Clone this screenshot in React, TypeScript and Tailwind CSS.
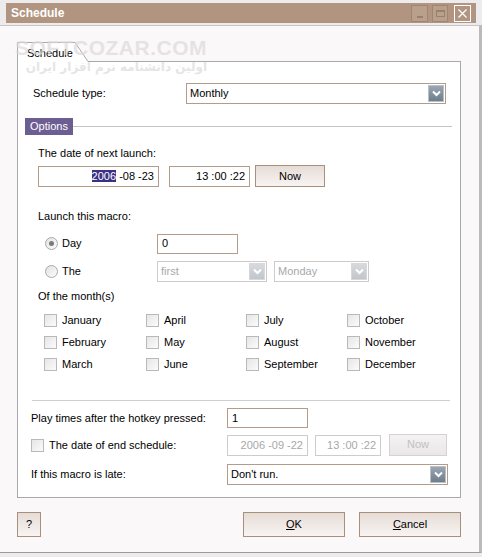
import React from "react";

// tan / taupe skin colours taken from the window chrome
const fieldBorder = "border border-[#b39d8a]";
const offBorder = "border border-[#cfcbca]";

function Chevron({ color = "#ffffff" }: { color?: string }) {
    return (
        <svg width="9" height="7" viewBox="0 0 9 7">
            <path d="M1 1.5 L4.5 5 L8 1.5" fill="none" stroke={color} strokeWidth="2" />
        </svg>
    );
}

function DropDown({ value, width, disabled }: { value: string; width: string; disabled?: boolean }) {
    return (
        <div className={`${width} h-[21px] flex items-center bg-white ${disabled ? offBorder : fieldBorder}`}>
            <span className={`flex-1 pl-[3px] ${disabled ? "text-[#a8a8a8]" : "text-black"}`}>{value}</span>
            <div
                className={`w-[16px] h-[17px] mr-[1px] flex items-center justify-center border ${
                    disabled
                        ? "border-[#d8d8d8] bg-gradient-to-b from-[#d7dadd] to-[#c1c6cb]"
                        : "border-[#b9c0c8] bg-gradient-to-b from-[#9aa6b3] to-[#6e7d8d]"
                }`}
            >
                <Chevron />
            </div>
        </div>
    );
}

function Field({ value, width, align = "left", disabled }: { value: React.ReactNode; width: string; align?: "left" | "right"; disabled?: boolean }) {
    return (
        <div
            className={`${width} h-[21px] flex items-center bg-white px-[4px] ${disabled ? offBorder + " text-[#a8a8a8]" : fieldBorder} ${
                align === "right" ? "justify-end" : ""
            }`}
        >
            {value}
        </div>
    );
}

function Btn({ children, width, height = "h-[22px]", disabled }: { children: React.ReactNode; width: string; height?: string; disabled?: boolean }) {
    return (
        <button
            className={`${width} ${height} flex items-center justify-center border ${
                disabled
                    ? "border-[#d6d2d2] bg-gradient-to-b from-[#f4f2f2] to-[#e9e7e7] text-[#c2c2c2]"
                    : "border-[#a8907c] bg-gradient-to-b from-[#e6dcd6] to-[#f8f4f2] text-black"
            }`}
        >
            {children}
        </button>
    );
}

function Check() {
    return <span className="w-[13px] h-[13px] border border-[#b9b9b9] bg-gradient-to-br from-[#e6e6e6] to-[#fbfbfb] shrink-0" />;
}

function Radio({ on }: { on?: boolean }) {
    return (
        <span className="w-[13px] h-[13px] rounded-full border border-[#a9a9a9] bg-gradient-to-br from-[#e2e2e2] to-[#fcfcfc] flex items-center justify-center shrink-0">
            {on && <span className="w-[5px] h-[5px] rounded-full bg-[#7a7a7a]" />}
        </span>
    );
}

const MONTHS = [
    ["January", "April", "July", "October"],
    ["February", "May", "August", "November"],
    ["March", "June", "September", "December"],
];

export default function App() {
    return (
        <div className="w-[482px] h-[557px] relative bg-[#eeebed] font-['Liberation_Sans',Arial,sans-serif] text-[11px] text-black leading-[13px] overflow-hidden">
            {/* title bar */}
            <div className="pt-[3px] px-[6px]">
                <div className="h-[20px] bg-[#b19581] flex items-center pl-[5px] pr-[5px]">
                    <span className="flex-1 text-white font-bold text-[12px]">Schedule</span>
                    <div className="w-[17px] h-[17px] border border-[#a08672] bg-[#b8a08d] flex items-end justify-center pb-[3px]">
                        <span className="w-[6px] h-[2px] bg-[#9a7f6b]" />
                    </div>
                    <div className="w-[16px] h-[17px] ml-[4px] border border-[#a08672] bg-[#b8a08d] flex items-center justify-center">
                        <span className="w-[9px] h-[7px] border border-[#9a7f6b] border-t-2" />
                    </div>
                    <div className="w-[17px] h-[17px] ml-[6px] border border-white flex items-center justify-center">
                        <svg width="9" height="9" viewBox="0 0 9 9">
                            <path d="M0.5 0.5 L8.5 8.5 M8.5 0.5 L0.5 8.5" stroke="#ffffff" strokeWidth="1.2" />
                        </svg>
                    </div>
                </div>
            </div>

            {/* dialog body */}
            <div className="mt-[2px] h-[528px] border-t border-[#c9c5c7] border-r-[3px] border-r-[#bdb9bb] border-b border-b-[#9e9a9c] bg-[#fbf8f9] pl-[17px] pr-[18px] pt-[16px]">
                {/* tab strip */}
                <div className="flex items-end h-[20px]">
                    <div className="w-[58px] h-[20px] border-l border-t border-[#a9a9a9] bg-white pl-[9px] pt-[4px]">Schedule</div>
                    <svg width="14" height="20" viewBox="0 0 14 20" className="shrink-0">
                        <path d="M0 0 L0.5 0.5 L13 19.5 L0 19.5 Z" fill="#ffffff" />
                        <path d="M0 0.5 L13 19.5 L14 19.5" fill="none" stroke="#a9a9a9" strokeWidth="1" />
                    </svg>
                    <div className="flex-1 border-b border-[#a9a9a9]" />
                </div>

                {/* tab panel */}
                <div className="h-[436px] border-l border-r border-b border-[#a9a9a9] bg-white pt-[21px]">
                    <div className="flex items-center h-[21px]">
                        <span className="ml-[15px] w-[153px]">Schedule type:</span>
                        <DropDown value="Monthly" width="w-[260px]" />
                    </div>

                    <div className="flex items-center mt-[14px] h-[17px]">
                        <span className="ml-[7px] h-[17px] px-[5px] bg-[#6c5e93] text-white flex items-center">Options</span>
                        <span className="flex-1 h-px bg-[#c4c4c4] mr-[8px]" />
                    </div>

                    <div className="ml-[20px] mt-[12px]">The date of next launch:</div>
                    <div className="flex items-center ml-[20px] mt-[6px]">
                        <Field
                            width="w-[121px]"
                            align="right"
                            value={
                                <span>
                                    <span className="bg-[#3b2f86] text-white">2006</span> -08 -23
                                </span>
                            }
                        />
                        <div className="ml-[10px]">
                            <Field width="w-[81px]" align="right" value="13 :00 :22" />
                        </div>
                        <div className="ml-[5px] -mt-[1px]">
                            <Btn width="w-[70px]">Now</Btn>
                        </div>
                    </div>

                    <div className="ml-[20px] mt-[23px]">Launch this macro:</div>
                    <div className="flex items-center mt-[11px] h-[19px]">
                        <div className="ml-[27px] w-[112px] flex items-center gap-[4px]">
                            <Radio on />
                            <span>Day</span>
                        </div>
                        <div className="w-[81px] h-[20px] flex items-center bg-white border border-[#b39d8a] px-[4px]">0</div>
                    </div>
                    <div className="flex items-center mt-[8px] h-[20px]">
                        <div className="ml-[27px] w-[112px] flex items-center gap-[4px]">
                            <Radio />
                            <span>The</span>
                        </div>
                        <DropDown value="first" width="w-[110px]" disabled />
                        <div className="ml-[7px]">
                            <DropDown value="Monday" width="w-[95px]" disabled />
                        </div>
                    </div>

                    <div className="ml-[20px] mt-[9px]">Of the month(s)</div>
                    <div className="ml-[26px] mt-[6px] grid grid-cols-[102px_100px_101px_1fr]">
                        {MONTHS.flat().map((m) => (
                            <div key={m} className="h-[22px] flex items-center gap-[5px]">
                                <Check />
                                <span>{m}</span>
                            </div>
                        ))}
                    </div>

                    <div className="mt-[25px] ml-[14px] mr-[10px] h-px bg-[#cfcfcf]" />

                    <div className="flex items-center mt-[7px] h-[20px]">
                        <span className="ml-[13px] w-[196px]">Play times after the hotkey pressed:</span>
                        <div className="w-[81px] h-[20px] flex items-center bg-white border border-[#b39d8a] px-[4px]">1</div>
                    </div>
                    <div className="flex items-center mt-[7px] h-[21px]">
                        <div className="ml-[13px] w-[196px] flex items-center gap-[5px]">
                            <Check />
                            <span>The date of end schedule:</span>
                        </div>
                        <Field width="w-[81px]" align="right" value="2006 -09 -22" disabled />
                        <div className="ml-[7px]">
                            <Field width="w-[66px]" align="right" value="13 :00 :22" disabled />
                        </div>
                        <div className="ml-[8px] -mt-[2px]">
                            <Btn width="w-[58px]" disabled>
                                Now
                            </Btn>
                        </div>
                    </div>
                    <div className="flex items-center mt-[8px] h-[21px]">
                        <span className="ml-[13px] w-[196px]">If this macro is late:</span>
                        <DropDown value="Don't run." width="w-[221px]" />
                    </div>
                </div>

                {/* footer buttons */}
                <div className="flex items-center mt-[14px]">
                    <Btn width="w-[24px]" height="h-[25px]">
                        ?
                    </Btn>
                    <div className="flex-1" />
                    <Btn width="w-[102px]" height="h-[25px]">
                        <span>
                            <span className="underline">O</span>K
                        </span>
                    </Btn>
                    <div className="ml-[14px]">
                        <Btn width="w-[102px]" height="h-[25px]">
                            <span>
                                <span className="underline">C</span>ancel
                            </span>
                        </Btn>
                    </div>
                </div>
            </div>

            {/* site watermark laid over the dialog */}
            <div className="absolute left-[15px] top-[37px] w-[192px] pointer-events-none select-none text-[#dedadb] opacity-70">
                <div className="font-bold text-[21px] leading-[22px] tracking-[0.5px] whitespace-nowrap">SOFTCOZAR.COM</div>
                <div dir="rtl" className="font-bold text-[12px] leading-[16px] text-right whitespace-nowrap font-['DejaVu_Sans',sans-serif]">
                    اولین دانشنامه نرم افزار ایران
                </div>
            </div>
        </div>
    );
}
